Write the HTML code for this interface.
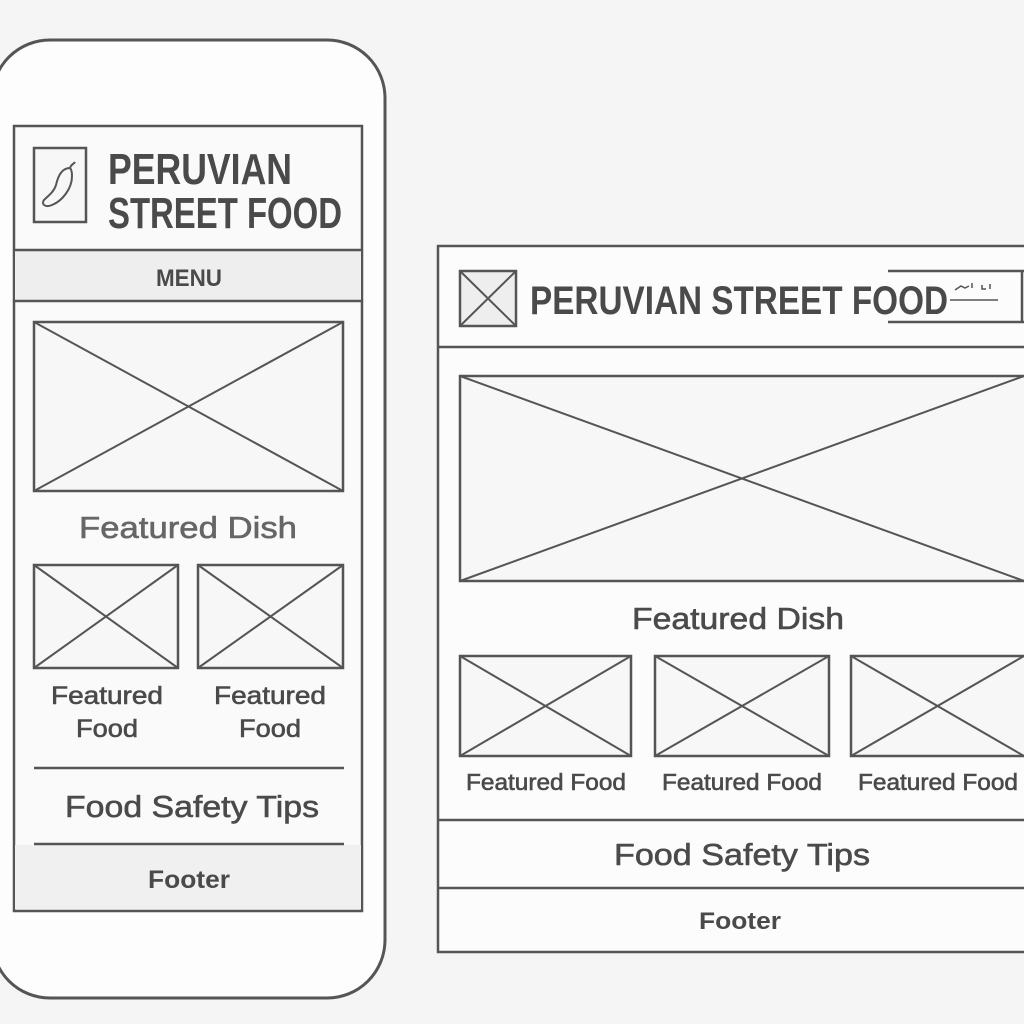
<!DOCTYPE html>
<html><head><meta charset="utf-8"><style>
html,body{margin:0;padding:0;background:#f5f5f5;width:1024px;height:1024px;overflow:hidden}
svg{display:block}
text{font-family:"Liberation Sans Narrow","Liberation Sans",sans-serif;fill:#4a4a4a}
.m{stroke:#4a4a4a;stroke-width:0.6}
</style></head><body>
<svg width="1024" height="1024" viewBox="0 0 1024 1024" xmlns="http://www.w3.org/2000/svg">
<rect width="1024" height="1024" fill="#f5f5f5"/>
<!-- phone -->
<rect x="-8" y="40" width="393" height="958" rx="58" fill="#fdfdfd" stroke="#555" stroke-width="3"/>
<rect x="14" y="126" width="348" height="785" fill="#fafafa" stroke="#555" stroke-width="2.5"/>
<rect x="15" y="251" width="346" height="49" fill="#eeeeee"/>
<line x1="14" y1="250" x2="362" y2="250" stroke="#555" stroke-width="2.5"/>
<line x1="14" y1="301" x2="362" y2="301" stroke="#555" stroke-width="2.5"/>
<rect x="34" y="148" width="52" height="74" fill="#f7f7f7" stroke="#555" stroke-width="2.5"/>
<path d="M70 168 C71 164 74 164 75 162 M70 168 C62 168 58 176 56 185 C54 192 48 196 44 200 C41 204 45 208 52 205 C62 201 72 189 72 176 C72 172 71 169 70 168 Z" fill="none" stroke="#555" stroke-width="2"/>
<text x="108" y="184" font-size="44" font-weight="bold" textLength="184" lengthAdjust="spacingAndGlyphs">PERUVIAN</text>
<text x="108" y="228" font-size="44" font-weight="bold" textLength="234" lengthAdjust="spacingAndGlyphs">STREET FOOD</text>
<text x="189" y="286" font-size="24" font-weight="bold" text-anchor="middle" textLength="66" lengthAdjust="spacingAndGlyphs">MENU</text>
<g fill="#f7f7f7" stroke="#555" stroke-width="2.5">
<rect x="34" y="322" width="309" height="169"/>
<rect x="34" y="565" width="144" height="103"/>
<rect x="198" y="565" width="145" height="103"/>
</g>
<g stroke="#555" stroke-width="2">
<path d="M34 322L343 491M343 322L34 491M34 565L178 668M178 565L34 668M198 565L343 668M343 565L198 668"/>
</g>
<text x="188" y="538" font-size="31" text-anchor="middle" style="fill:#666;stroke:#666;stroke-width:0.6" textLength="218" lengthAdjust="spacingAndGlyphs">Featured Dish</text>
<text class="m" x="107" y="704" font-size="25" text-anchor="middle" textLength="112" lengthAdjust="spacingAndGlyphs">Featured</text>
<text class="m" x="107" y="737" font-size="25" text-anchor="middle" textLength="62" lengthAdjust="spacingAndGlyphs">Food</text>
<text class="m" x="270" y="704" font-size="25" text-anchor="middle" textLength="112" lengthAdjust="spacingAndGlyphs">Featured</text>
<text class="m" x="270" y="737" font-size="25" text-anchor="middle" textLength="62" lengthAdjust="spacingAndGlyphs">Food</text>
<line x1="34" y1="768" x2="344" y2="768" stroke="#555" stroke-width="2.5"/>
<text class="m" x="192" y="817" font-size="31" text-anchor="middle" textLength="254" lengthAdjust="spacingAndGlyphs">Food Safety Tips</text>
<rect x="15" y="845" width="346" height="64" fill="#f0f0f0"/>
<line x1="34" y1="844" x2="344" y2="844" stroke="#555" stroke-width="2.5"/>
<text x="189" y="888" font-size="25" font-weight="bold" text-anchor="middle" textLength="82" lengthAdjust="spacingAndGlyphs">Footer</text>
<!-- desktop -->
<rect x="438" y="246" width="600" height="706" fill="#fcfcfc" stroke="#555" stroke-width="2.5"/>
<line x1="438" y1="347" x2="1024" y2="347" stroke="#555" stroke-width="2.5"/>
<rect x="460" y="271" width="56" height="55" fill="#eee" stroke="#555" stroke-width="2.5"/>
<path d="M460 271L516 326M516 271L460 326" stroke="#555" stroke-width="2"/>
<text x="530" y="314" font-size="40" font-weight="bold" textLength="418" lengthAdjust="spacingAndGlyphs">PERUVIAN STREET FOOD</text>
<path d="M888 271H1024M888 322H1024M1022 271V322" stroke="#555" stroke-width="2.5" fill="none"/>
<path d="M950 300H998M955 290l6-4 4 2 4-2M972 283v5M982 285v4h4M990 284v5" stroke="#555" stroke-width="1.5" fill="none"/>
<rect x="460" y="376" width="580" height="205" fill="#f7f7f7" stroke="#555" stroke-width="2.5"/>
<path d="M460 376L1024 581M1024 376L460 581" stroke="#555" stroke-width="2"/>
<text class="m" x="738" y="629" font-size="31" text-anchor="middle" textLength="212" lengthAdjust="spacingAndGlyphs">Featured Dish</text>
<g fill="#f7f7f7" stroke="#555" stroke-width="2.5">
<rect x="460" y="656" width="171" height="100"/>
<rect x="655" y="656" width="174" height="100"/>
<rect x="851" y="656" width="190" height="100"/>
</g>
<path d="M460 656L631 756M631 656L460 756M655 656L829 756M829 656L655 756M851 656L1024 756M1024 656L851 756" stroke="#555" stroke-width="2"/>
<text class="m" x="546" y="790" font-size="23" text-anchor="middle" textLength="160" lengthAdjust="spacingAndGlyphs">Featured Food</text>
<text class="m" x="742" y="790" font-size="23" text-anchor="middle" textLength="160" lengthAdjust="spacingAndGlyphs">Featured Food</text>
<text class="m" x="938" y="790" font-size="23" text-anchor="middle" textLength="160" lengthAdjust="spacingAndGlyphs">Featured Food</text>
<line x1="438" y1="820" x2="1024" y2="820" stroke="#555" stroke-width="2.5"/>
<text class="m" x="742" y="865" font-size="31" text-anchor="middle" textLength="256" lengthAdjust="spacingAndGlyphs">Food Safety Tips</text>
<line x1="438" y1="888" x2="1024" y2="888" stroke="#555" stroke-width="2.5"/>
<text x="740" y="929" font-size="24" font-weight="bold" text-anchor="middle" textLength="82" lengthAdjust="spacingAndGlyphs">Footer</text>
</svg>
</body></html>
